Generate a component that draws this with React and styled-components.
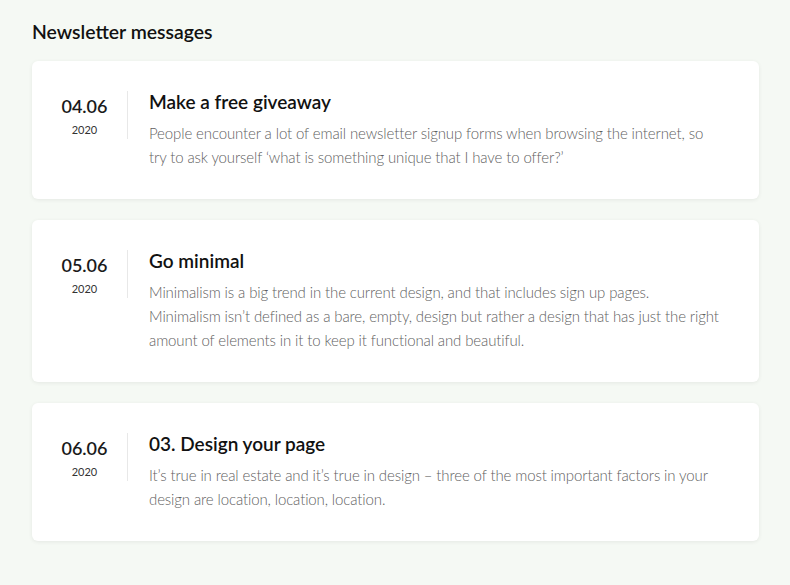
import React from "react";
import styled, { createGlobalStyle } from "styled-components";

const Global = createGlobalStyle`
  html, body { margin: 0; padding: 0; background: #f5f9f4; }
  body { font-family: "Lato", "Noto Sans", sans-serif; }
  * { box-sizing: border-box; }
`;

const Page = styled.div`
  padding: 20px 31px 40px 32px;
  display: flex;
  flex-direction: column;
`;

const Title = styled.h1`
  margin: 0 0 17px;
  font-size: 19.4px;
  line-height: 24px;
  font-weight: 600;
  color: #111;
`;

const List = styled.div`
  display: flex;
  flex-direction: column;
  gap: 21px;
`;

const Card = styled.div`
  background: #fff;
  border-radius: 6px;
  box-shadow: 0 1px 4px rgba(0, 0, 0, 0.07);
  padding: 30px 40px 30px 0;
  display: flex;
  align-items: flex-start;
`;

const DateCol = styled.div`
  width: 96px;
  flex: none;
  border-right: 1px solid #e8e8e8;
  display: flex;
  flex-direction: column;
  align-items: center;
  padding: 4px 0 0 10px;
  height: 48px;
`;

const Day = styled.div`
  font-size: 18px;
  line-height: 22px;
  font-weight: 600;
  color: #1a1a1a;
`;

const Year = styled.div`
  font-size: 11px;
  line-height: 14px;
  margin-top: 6px;
  color: #333;
`;

const Body = styled.div`
  padding-left: 21px;
  display: flex;
  flex-direction: column;
`;

const Heading = styled.h2`
  margin: 0 0 8px;
  font-size: 19px;
  line-height: 22px;
  font-weight: 600;
  color: #111;
`;

const Text = styled.p`
  margin: 0;
  font-size: 15px;
  letter-spacing: -0.12px;
  line-height: 24px;
  font-weight: 300;
  color: #5f5f5f;
`;

const items = [
  {
    day: "04.06",
    year: "2020",
    title: "Make a free giveaway",
    text: "People encounter a lot of email newsletter signup forms when browsing the internet, so try to ask yourself \u2018what is something unique that I have to offer?\u2019",
  },
  {
    day: "05.06",
    year: "2020",
    title: "Go minimal",
    text: "Minimalism is a big trend in the current design, and that includes sign up pages. Minimalism isn\u2019t defined as a bare, empty, design but rather a design that has just the right amount of elements in it to keep it functional and beautiful.",
  },
  {
    day: "06.06",
    year: "2020",
    title: "03. Design your page",
    text: "It\u2019s true in real estate and it\u2019s true in design \u2013 three of the most important factors in your design are location, location, location.",
  },
];

export default function App() {
  return (
    <Page>
      <Global />
      <Title>Newsletter messages</Title>
      <List>
        {items.map((it) => (
          <Card key={it.day}>
            <DateCol>
              <Day>{it.day}</Day>
              <Year>{it.year}</Year>
            </DateCol>
            <Body>
              <Heading>{it.title}</Heading>
              <Text>{it.text}</Text>
            </Body>
          </Card>
        ))}
      </List>
    </Page>
  );
}
